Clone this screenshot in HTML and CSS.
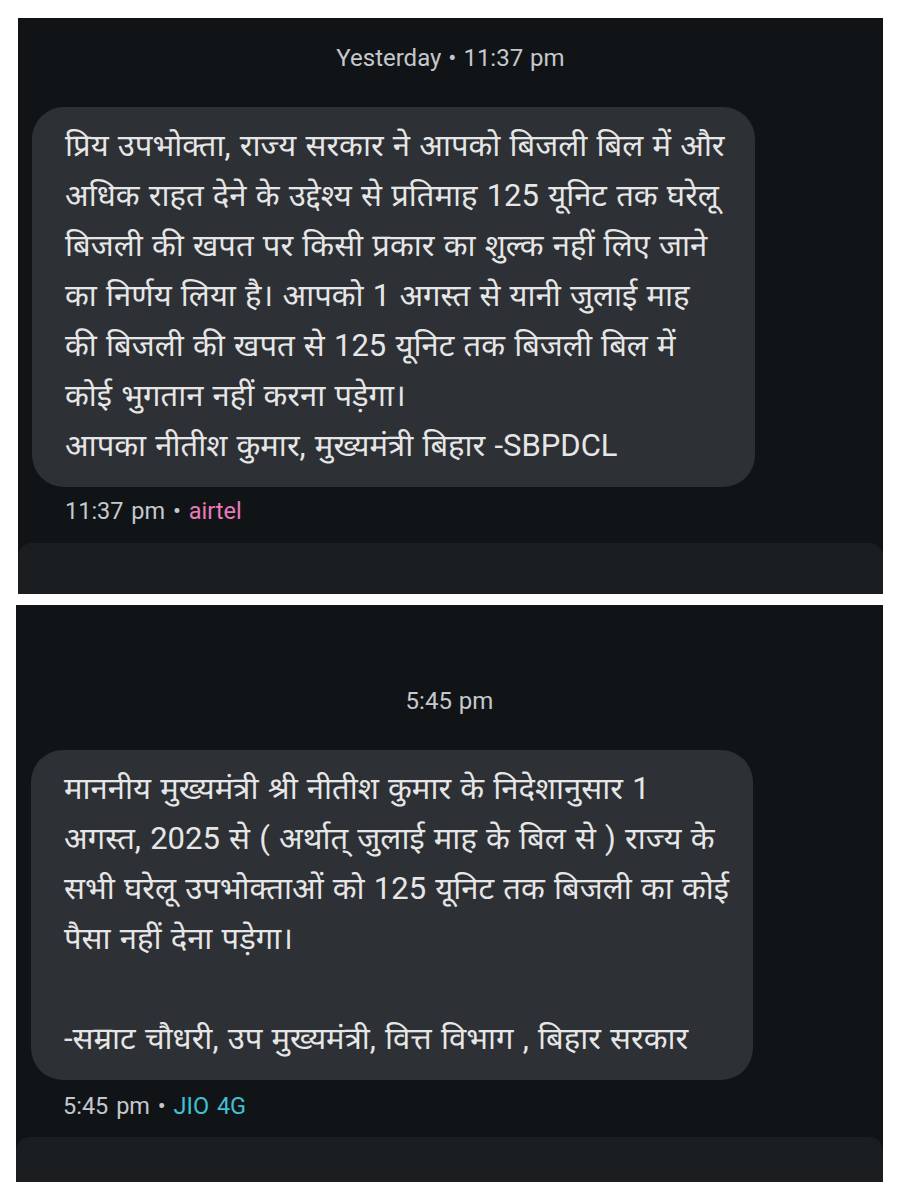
FILE: index.html
```html
<!DOCTYPE html>
<html lang="hi">
<head>
    <meta charset="UTF-8">
    <meta name="viewport" content="width=device-width, initial-scale=1.0">
    <title>SMS Screenshots</title>
    <link rel="stylesheet" href="styles.css">
</head>
<body>
    <div class="shot shot-first">
        <div class="stamp">Yesterday • 11:37 pm</div>
        <div class="bubble">
            प्रिय उपभोक्ता, राज्य सरकार ने आपको बिजली बिल में और<br>
            अधिक राहत देने के उद्देश्य से प्रतिमाह 125 यूनिट तक घरेलू<br>
            बिजली की खपत पर किसी प्रकार का शुल्क नहीं लिए जाने<br>
            का निर्णय लिया है। आपको 1 अगस्त से यानी जुलाई माह<br>
            की बिजली की खपत से 125 यूनिट तक बिजली बिल में<br>
            कोई भुगतान नहीं करना पड़ेगा।<br>
            आपका नीतीश कुमार, मुख्यमंत्री बिहार -SBPDCL
        </div>
        <div class="meta">11:37 pm • <span class="sim sim-airtel">airtel</span></div>
        <div class="next-card"></div>
    </div>

    <div class="shot shot-second">
        <div class="stamp">5:45 pm</div>
        <div class="bubble">
            माननीय मुख्यमंत्री श्री नीतीश कुमार के निदेशानुसार 1<br>
            अगस्त, 2025 से ( अर्थात् जुलाई माह के बिल से ) राज्य के<br>
            सभी घरेलू उपभोक्ताओं को 125 यूनिट तक बिजली का कोई<br>
            पैसा नहीं देना पड़ेगा।<br>
            <br>
            -सम्राट चौधरी, उप मुख्यमंत्री, वित्त विभाग , बिहार सरकार
        </div>
        <div class="meta meta-second">5:45 pm • <span class="sim sim-jio">JIO 4G</span></div>
        <div class="next-card"></div>
    </div>
</body>
</html>
```

FILE: styles.css
```css
body {
    margin: 0;
    background: #ffffff;
    font-family: Roboto, "Noto Sans Devanagari", "Noto Sans", sans-serif;
}

.shot {
    background-color: #111417;
    overflow: hidden;
    display: flex;
    flex-direction: column;
}

.shot-first {
    margin: 18px 0 0 18px;
    width: 865px;
    height: 576px;
    padding-top: 25px;
    box-sizing: border-box;
}

.shot-second {
    margin: 11px 0 0 16px;
    width: 867px;
    height: 577px;
    padding-top: 81px;
    box-sizing: border-box;
}

.stamp {
    text-align: center;
    color: #c5c8cc;
    font-size: 24px;
    line-height: 30px;
    word-spacing: 1px;
}

.bubble {
    margin-top: 34px;
    margin-left: 14px;
    width: 723px;
    box-sizing: border-box;
    padding: 14px 10px 16px 33px;
    background-color: #2d3034;
    border-radius: 32px;
    color: #e6e6e6;
    font-size: 31px;
    line-height: 50px;
    word-spacing: 1.5px;
    white-space: nowrap;
}

.shot-second .bubble {
    margin-left: 15px;
    width: 722px;
}

.meta {
    margin-top: 9px;
    padding-left: 47px;
    color: #c5c8cc;
    font-size: 23.5px;
    line-height: 30px;
    word-spacing: 2px;
}

.meta-second {
    margin-top: 11px;
    padding-left: 47px;
}

.sim-airtel {
    color: #e87bb6;
}

.sim-jio {
    color: #3fc0d3;
}

.next-card {
    margin-top: 17px;
    height: 80px;
    background-color: #1b1e21;
    border-radius: 14px 14px 0 0;
    flex-shrink: 0;
}

.shot-second .next-card {
    margin-top: 16px;
}
```
